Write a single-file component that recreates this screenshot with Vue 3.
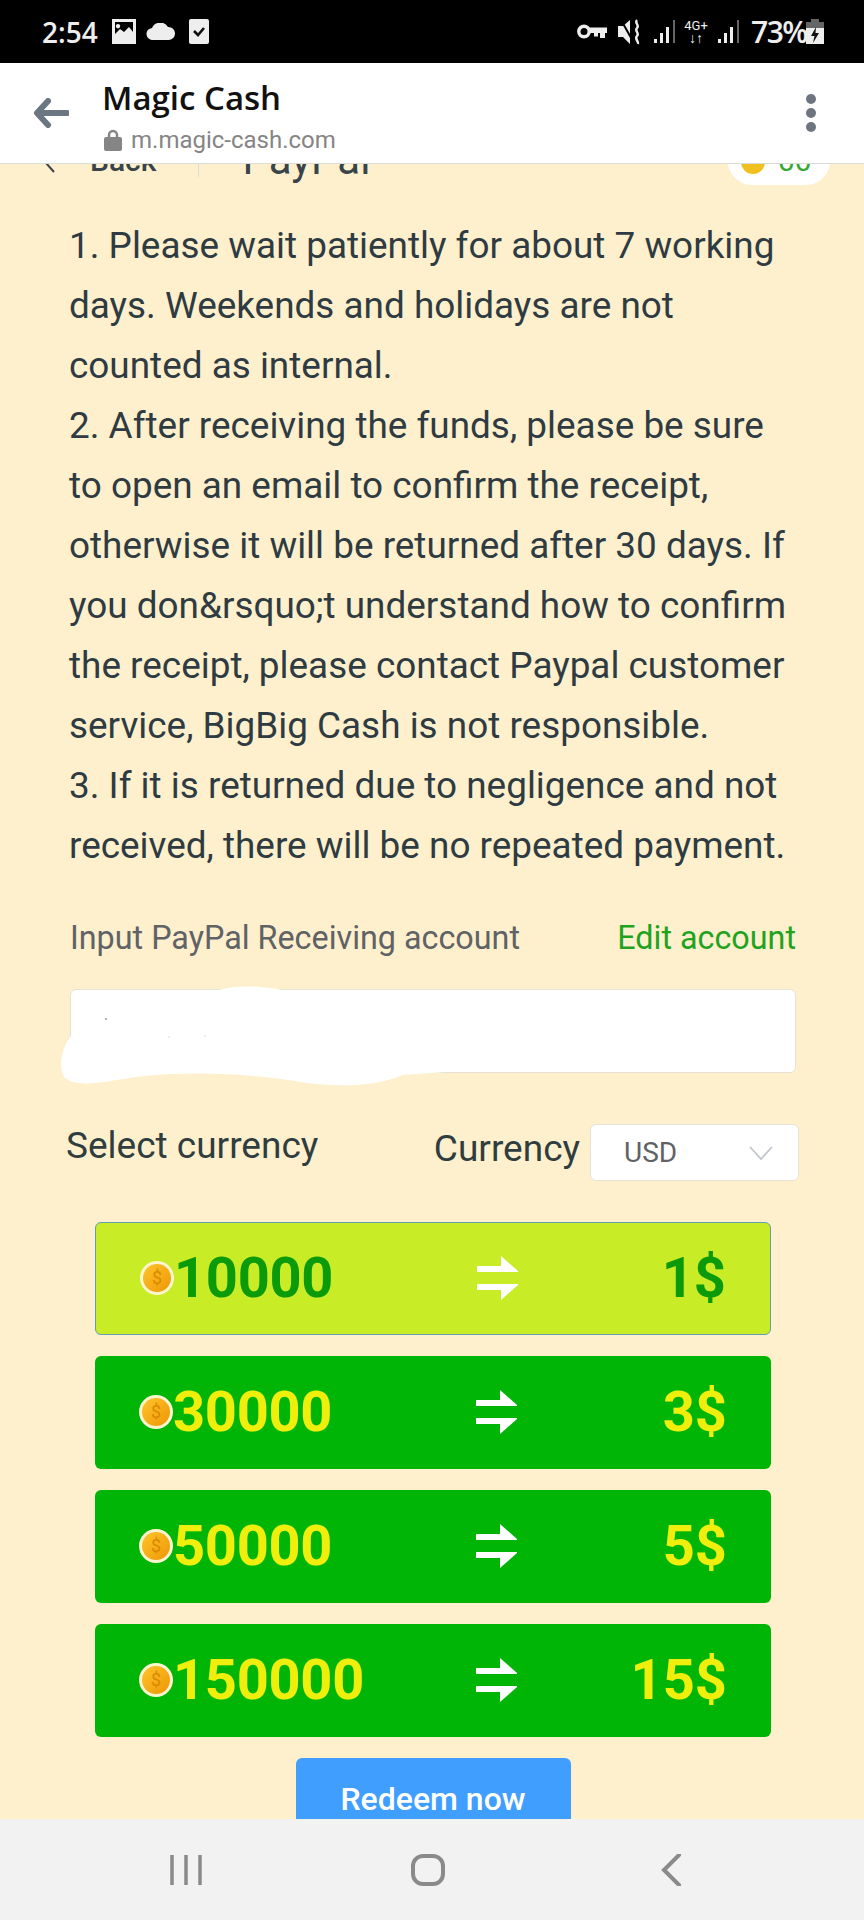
<template>
  <div class="phone">
    <!-- status bar -->
    <div class="status-bar">
      <div class="status-left">
        <span class="time">2:54</span>
        <svg class="ic-image" viewBox="0 0 24 25"><path fill="#eee" fill-rule="evenodd" d="M0 0H24V25H0ZM3 3V15L8 10L12 13L17 8L21 13V3ZM6 5a2.2 2.2 0 1 0 .01 0Z"/></svg>
        <svg class="ic-cloud" viewBox="0 0 30 17"><path fill="#eee" d="M7 17a6 6 0 0 1-1-12A9 9 0 0 1 22 4a6.500 6.500 0 0 1 1 13Z"/></svg>
        <svg class="ic-check" viewBox="0 0 20 25"><path fill="#eee" d="M2 0H18a2 2 0 0 1 2 2V23a2 2 0 0 1-2 2H2a2 2 0 0 1-2-2V2A2 2 0 0 1 2 0Z"/><path d="M5 12l4 4 6-7" fill="none" stroke="#111" stroke-width="2.600"/></svg>
      </div>
      <div class="status-right">
        <svg class="ic-key" viewBox="0 0 30 15"><circle cx="7" cy="7.500" r="5.200" fill="none" stroke="#eee" stroke-width="3.400"/><path d="M12 3.500H30V9H28V14H23V9H21V12.500H17V9H12Z" fill="#eee"/></svg>
        <svg class="ic-mute" viewBox="0 0 25 26"><path d="M0 7H5L12 1V25L5 18H0Z" fill="#eee"/><path d="M3 1 16 24" stroke="#000" stroke-width="2"/><path d="M19 1c-3 3 3 5 0 8s3 5 0 8 2 5 1 8" fill="none" stroke="#eee" stroke-width="2.400"/></svg>
        <svg class="ic-signal" viewBox="0 0 23 24"><path d="M1 19h3v4H1ZM7 13h3v10H7ZM13 7h3v16h-3Z" fill="#eee"/><path d="M20 0h2v23h-2Z" fill="#666"/></svg>
        <div class="net"><span>4G+</span><span class="net-arrows">↓↑</span></div>
        <svg class="ic-signal" viewBox="0 0 23 24"><path d="M1 19h3v4H1ZM7 13h3v10H7ZM13 7h3v16h-3Z" fill="#eee"/><path d="M20 0h2v23h-2Z" fill="#666"/></svg>
        <span class="battery-text">73%</span>
        <svg class="ic-battery" viewBox="0 0 18 25"><path d="M5 0h8v3h5v6H0V3h5Z" fill="#666"/><path d="M0 9h18v16H0Z" fill="#eee"/><path d="M10 8 5 17h3.500L7 24l6-10H9.500Z" fill="#111"/></svg>
      </div>
    </div>

    <!-- browser bar -->
    <div class="browser-bar">
      <svg class="ic-back" viewBox="0 0 36 30"><path d="M15 3 4 15l11 12M5 15H34" fill="none" stroke="#6b7683" stroke-width="6" stroke-linecap="round" stroke-linejoin="round"/></svg>
      <div class="site">
        <div class="site-name">Magic Cash</div>
        <div class="site-url">
          <svg class="ic-lock" viewBox="0 0 18 22"><path d="M5 9V6a4 4 0 0 1 8 0v3" fill="none" stroke="#858585" stroke-width="2.500"/><rect y="8" width="18" height="14" rx="2" fill="#858585"/></svg>
          <span>m.magic-cash.com</span>
        </div>
      </div>
      <div class="dots"><i></i><i></i><i></i></div>
    </div>

    <div class="page">
      <!-- page header, scrolled mostly under the browser bar -->
      <div class="page-head">
        <div class="head-left">
          <svg class="ic-head-back" viewBox="0 0 12 10"><path d="M1 0l8 9" fill="none" stroke="#39434a" stroke-width="2"/></svg>
          <span class="head-back">Back</span>
          <span class="head-line"></span>
          <span class="head-title">PayPal</span>
        </div>
        <div class="head-pill">
          <span class="pill-coin"></span>
          <span class="pill-num">00</span>
        </div>
      </div>

      <div class="notes">
        <div v-for="note in notes" :key="note">{{ note }}</div>
      </div>

      <div class="account-label">
        <span>Input PayPal Receiving account</span>
        <span class="edit">Edit account</span>
      </div>
      <div class="account-input">
        <svg class="scribble" viewBox="0 0 385 104">
          <path fill="#fff" d="M12 50C0 66 0 84 6 92c12 10 40 4 70-1 50-6 110-4 160 4 40 7 80 6 108-6l41-3V20L230 6c-20-6-50-8-70-2L40 8Z"/>
          <circle cx="47" cy="33" r="1" fill="#999"/>
          <circle cx="110" cy="51" r=".7" fill="#ccc"/>
          <circle cx="146" cy="50" r=".7" fill="#ccc"/>
        </svg>
      </div>

      <div class="currency-row">
        <span class="select-label">Select currency</span>
        <div class="currency-right">
          <span class="currency-label">Currency</span>
          <div class="currency-select">
            <span>USD</span>
            <svg class="ic-chevron" viewBox="0 0 24 14"><path d="M1 1l11 12L23 1" fill="none" stroke="#c0c4cc" stroke-width="1.800"/></svg>
          </div>
        </div>
      </div>

      <div class="options">
        <div v-for="(item, index) in options" :key="item.coins" class="option" :class="{ active: index === 0 }">
          <div class="option-coins">
            <svg class="coin" viewBox="0 0 34 34">
              <defs>
                <linearGradient :id="'coin' + index" x1="0" y1="0" x2="1" y2="1">
                  <stop offset="0" stop-color="#ffc52a"/>
                  <stop offset="1" stop-color="#ee9606"/>
                </linearGradient>
              </defs>
              <circle cx="17" cy="17" r="17" fill="#fff6cf"/>
              <circle cx="17" cy="17" r="14" :fill="'url(#coin' + index + ')'"/>
              <text x="17" y="23" text-anchor="middle" class="coin-text">$</text>
            </svg>
            <span>{{ item.coins }}</span>
          </div>
          <svg class="ic-exchange" viewBox="0 0 41 44"><path fill="#fff" d="M0 10H24V0L41 15V16H0ZM0 28H41V29L24 44V34H0Z"/></svg>
          <div class="option-money">{{ item.money }}$</div>
        </div>
      </div>

      <button class="redeem">Redeem now</button>
    </div>

    <!-- android navigation -->
    <div class="nav-bar">
      <svg class="nav-ic" viewBox="0 0 40 32"><path d="M6 1V31M20 1V31M34 1V31" fill="none" stroke="#8a8a8a" stroke-width="3.500"/></svg>
      <svg class="nav-ic" viewBox="0 0 40 32"><rect x="5" y="2" width="30" height="28" rx="10" fill="none" stroke="#8a8a8a" stroke-width="4"/></svg>
      <svg class="nav-ic" viewBox="0 0 40 32"><path d="M29 1 14 16l15 15" fill="none" stroke="#8a8a8a" stroke-width="4" stroke-linecap="round"/></svg>
    </div>
  </div>
</template>

<script setup>
const notes = [
  '1. Please wait patiently for about 7 working days. Weekends and holidays are not counted as internal.',
  '2. After receiving the funds, please be sure to open an email to confirm the receipt, otherwise it will be returned after 30 days. If you don&rsquo;t understand how to confirm the receipt, please contact Paypal customer service, BigBig Cash is not responsible.',
  '3. If it is returned due to negligence and not received, there will be no repeated payment.'
]

const options = [
  { coins: 10000, money: 1 },
  { coins: 30000, money: 3 },
  { coins: 50000, money: 5 },
  { coins: 150000, money: 15 }
]
</script>

<style scoped>
.phone {
  display: flex;
  flex-direction: column;
  width: 864px;
  height: 1920px;
  overflow: hidden;
  background: #fef0cc;
  font-family: Roboto, "Liberation Sans", sans-serif;
}

/* status bar */
.status-bar {
  flex: none;
  display: flex;
  align-items: center;
  justify-content: space-between;
  height: 63px;
  padding: 0 40px 0 42px;
  background: #000;
  color: #eee;
}
.status-left,
.status-right {
  display: flex;
  align-items: center;
}
.time {
  width: 70px;
  font-family: "Open Sans", sans-serif;
  font-size: 28px;
  font-weight: 600;
}
.ic-image { width: 24px; height: 25px; }
.ic-cloud { width: 30px; height: 17px; margin-left: 10px; }
.ic-check { width: 20px; height: 25px; margin-left: 13px; }
.ic-key { width: 30px; height: 15px; }
.ic-mute { width: 25px; height: 26px; margin-left: 11px; }
.ic-signal { width: 23px; height: 24px; margin-left: 10px; }
.net {
  display: flex;
  flex-direction: column;
  align-items: center;
  width: 26px;
  margin-left: 7px;
  font-size: 13px;
  line-height: 13px;
  white-space: nowrap;
}
.net-arrows { font-size: 14px; font-weight: 700; }
.net + .ic-signal { margin-left: 8px; }
.battery-text {
  width: 55px;
  margin-left: 11px;
  font-family: "Open Sans", sans-serif;
  font-size: 30px;
  font-weight: 600;
  letter-spacing: -1.500px;
}
.ic-battery { width: 18px; height: 25px; }

/* browser bar */
.browser-bar {
  flex: none;
  display: flex;
  align-items: center;
  height: 101px;
  padding: 6px 48px 0 33px;
  box-sizing: border-box;
  background: #fff;
  border-bottom: 1px solid #dcdcd6;
  z-index: 1;
}
.ic-back { width: 36px; height: 30px; margin-top: -6px; }
.site { flex: 1; margin-left: 33px; }
.site-name {
  font-family: "Open Sans", sans-serif;
  font-size: 33px;
  font-weight: 600;
  line-height: 40px;
  color: #111;
}
.site-url {
  display: flex;
  align-items: center;
  gap: 9px;
  margin-top: 8px;
  padding-left: 2px;
  font-size: 24px;
  line-height: 28px;
  color: #858585;
}
.ic-lock { width: 18px; height: 22px; }
.dots {
  display: flex;
  flex-direction: column;
  gap: 4px;
  margin-top: -6px;
}
.dots i {
  width: 10px;
  height: 10px;
  border-radius: 50%;
  background: #6d7680;
}

/* page */
.page {
  flex: 1;
  min-height: 0;
  padding: 0 68px 0 70px;
  overflow: hidden;
}
.page-head {
  display: flex;
  align-items: flex-end;
  justify-content: space-between;
  height: 21px;
  margin: 0 -34px 0 -70px;
  overflow: hidden;
}
.head-left {
  display: flex;
  align-items: flex-end;
  padding-left: 45px;
  color: #39434a;
}
.ic-head-back { width: 12px; height: 10px; margin-bottom: 12px; }
.head-back {
  margin-left: 33px;
  margin-bottom: 9px;
  font-size: 30px;
  font-weight: 500;
  line-height: 30px;
}
.head-line {
  width: 1px;
  height: 30px;
  margin: 0 43px 8px 42px;
  background: #ddd;
}
.head-title {
  font-size: 42px;
  line-height: 50px;
}
.head-pill {
  display: flex;
  align-items: flex-end;
  gap: 13px;
  width: 102px;
  height: 60px;
  padding: 0 0 11px 13px;
  box-sizing: border-box;
  background: #fff;
  border-radius: 0 0 24px 24px;
}
.pill-coin {
  width: 24px;
  height: 24px;
  border-radius: 50%;
  background: #f0c020;
}
.pill-num {
  font-size: 30px;
  line-height: 26px;
  color: #35a835;
}
.notes {
  margin-left: -1px;
  padding-top: 31px;
  font-size: 36.900px;
  line-height: 60px;
  color: #2f3b42;
}
.account-label {
  display: flex;
  align-items: center;
  justify-content: space-between;
  height: 40px;
  margin-top: 42px;
  font-size: 32.300px;
  color: #606266;
}
.edit { color: #1fa31f; }
.account-input {
  position: relative;
  height: 84px;
  margin-top: 31px;
  background: #fff;
  border: 1px solid #e6e3d6;
  border-radius: 6px;
  box-sizing: border-box;
}
.scribble {
  position: absolute;
  left: -12px;
  top: -4px;
  width: 385px;
  height: 104px;
}
.currency-row {
  display: flex;
  align-items: center;
  justify-content: space-between;
  height: 57px;
  margin: 51px -3px 0 -4px;
  color: #303d3f;
}
.select-label {
  margin-bottom: 14px;
  font-size: 37px;
}
.currency-right {
  display: flex;
  align-items: center;
  gap: 10px;
}
.currency-label {
  margin-bottom: 8px;
  font-size: 37px;
}
.currency-select {
  display: flex;
  align-items: center;
  justify-content: space-between;
  width: 209px;
  height: 57px;
  padding: 0 25px 0 33px;
  box-sizing: border-box;
  background: #fff;
  border: 1px solid #e6e3d6;
  border-radius: 6px;
  font-size: 28px;
  color: #606266;
}
.ic-chevron { width: 24px; height: 14px; }
.options {
  display: flex;
  flex-direction: column;
  gap: 21.500px;
  width: 676px;
  margin: 41px 0 0 25px;
}
.option {
  display: grid;
  grid-template-columns: 337px 41px 1fr;
  align-items: center;
  height: 112.500px;
  padding: 0 44px;
  box-sizing: border-box;
  background: #00b505;
  border-radius: 6px;
  font-size: 56px;
  font-weight: 700;
  color: #efee0c;
}
.option.active {
  background: #c8ec25;
  border: 1px solid #5f9fb0;
  color: #0a9a0a;
}
.option-coins {
  display: flex;
  align-items: center;
  letter-spacing: -0.300px;
}
.coin { width: 34px; height: 34px; }
.coin-text {
  font-family: Roboto, sans-serif;
  font-size: 18px;
  font-weight: 400;
  fill: #d98a00;
}
.ic-exchange { width: 41px; height: 44px; }
.option-money { text-align: right; }
.redeem {
  display: block;
  width: 275px;
  height: 82px;
  margin: 21px auto 0;
  padding: 0;
  border: none;
  border-radius: 6px;
  background: #409eff;
  font-family: inherit;
  font-size: 32px;
  font-weight: 500;
  color: #fff;
}

/* android nav */
.nav-bar {
  flex: none;
  display: flex;
  align-items: center;
  justify-content: center;
  gap: 202px;
  height: 101px;
  padding: 0 8px 0 0;
  box-sizing: border-box;
  background: #f2f2f2;
}
.nav-ic { width: 40px; height: 32px; }
</style>

<style>
body { background: #fef0cc; }
</style>
